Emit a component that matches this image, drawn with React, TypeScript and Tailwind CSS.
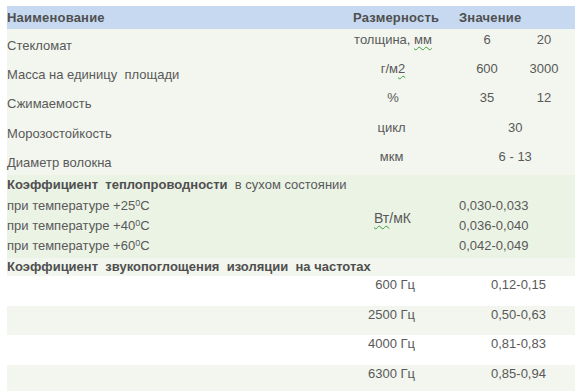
import React from 'react';

const spell = 'underline decoration-wavy decoration-[#3c9a3c] decoration-1 underline-offset-2';

const topRows = [
  { name: 'Стекломат', dim: <>толщина, <span className={spell}>мм</span></>, a: '6', b: '20' },
  { name: 'Масса на единицу  площади', dim: <>г/м<span className={spell}>2</span></>, a: '600', b: '3000' },
  { name: 'Сжимаемость', dim: '%', a: '35', b: '12' },
  { name: 'Морозостойкость', dim: 'цикл', a: '30' },
  { name: 'Диаметр волокна', dim: 'мкм', a: '6 - 13' },
];

const thermal = [
  { t: '25', v: '0,030-0,033' },
  { t: '40', v: '0,036-0,040' },
  { t: '60', v: '0,042-0,049' },
];

const sound = [
  { f: '600 Гц', v: '0,12-0,15' },
  { f: '2500 Гц', v: '0,50-0,63' },
  { f: '4000 Гц', v: '0,81-0,83' },
  { f: '6300 Гц', v: '0,85-0,94' },
];

export default function App() {
  return (
    <div className="w-[580px] h-[391px] overflow-hidden bg-white pt-[6px] pl-[7px] text-[13px] leading-4 text-[#595959] font-['Liberation_Sans',Arial,sans-serif]">
      <div className="w-[568px]">
        {/* header */}
        <div className="flex h-[23px] items-center bg-[#c6d9f0] font-bold text-[#4f4f4f]">
          <div className="w-[346px] tracking-[0.2px]">Наименование</div>
          <div className="w-[106px] tracking-[0.2px]">Размерность</div>
          <div className="tracking-[0.2px]">Значение</div>
        </div>

        {/* basic properties */}
        <div className="bg-[#f2f6ee]">
          {topRows.map((r) => (
            <div key={r.name} className="flex h-[29.2px]">
              <div className="w-[341px] self-center pt-[5px] whitespace-pre">{r.name}</div>
              <div className="w-[109px] pt-[3px] pr-[19px] text-center">{r.dim}</div>
              {r.b ? (
                <>
                  <div className="w-[60px] pt-[3px] text-center">{r.a}</div>
                  <div className="w-[54px] pt-[3px] text-center">{r.b}</div>
                </>
              ) : (
                <div className="w-[120px] pt-[3px] text-center">{r.a}</div>
              )}
            </div>
          ))}
        </div>

        {/* thermal conductivity */}
        <div className="bg-[#ebf3e5] pb-[2px]">
          <div className="flex h-[21px] items-center">
            <span className="font-bold text-[#4f4f4f] whitespace-pre">Коэффициент  теплопроводности  </span>
            <span>в сухом состоянии</span>
          </div>
          <div className="flex">
            <div className="w-[346px]">
              {thermal.map((t) => (
                <div key={t.t} className="flex h-[20px] items-center">
                  при температуре +{t.t}<sup className="text-[9px] -top-[3px]">0</sup>C
                </div>
              ))}
            </div>
            <div className="w-[106px] pt-[14px] pl-[21px] text-[14px]">
              <span className={spell}>Вт</span>/мК
            </div>
            <div>
              {thermal.map((t) => (
                <div key={t.v} className="flex h-[20px] items-center">{t.v}</div>
              ))}
            </div>
          </div>
        </div>

        {/* sound absorption */}
        <div className="flex h-[18px] items-center bg-[#f2f6ee] font-bold text-[#4f4f4f] whitespace-pre">
          Коэффициент  звукопоглощения  изоляции  на частотах
        </div>
        {sound.map((s, i) => (
          <div key={s.f} className={`flex h-[29.7px] pt-[1px] ${i % 2 ? 'bg-[#f2f6ee]' : 'bg-white'}`}>
            <div className="w-[408px] text-right">{s.f}</div>
            <div className="w-[76px]" />
            <div>{s.v}</div>
          </div>
        ))}
      </div>
    </div>
  );
}
